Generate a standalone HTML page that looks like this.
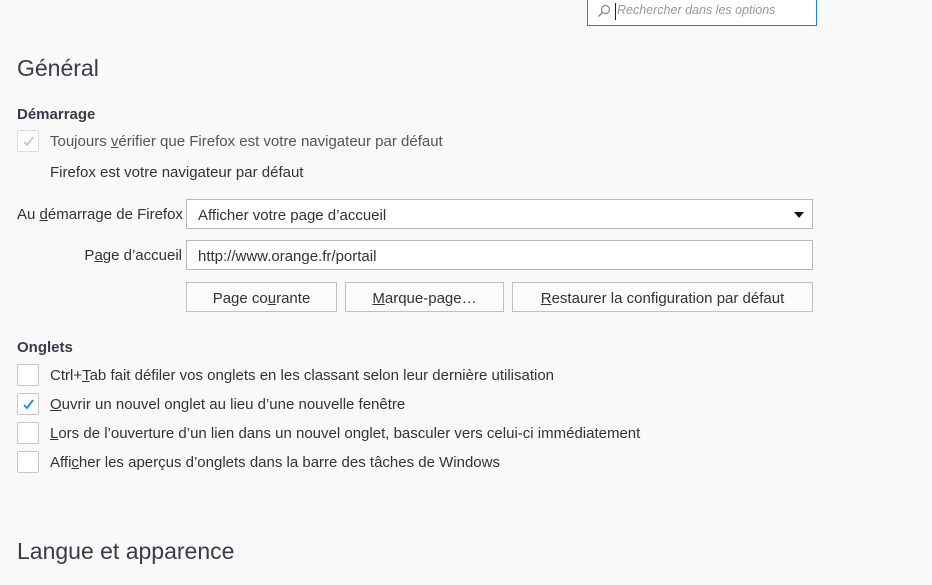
<!DOCTYPE html>
<html><head><meta charset="utf-8"><style>
*{box-sizing:border-box;margin:0;padding:0}
body{width:932px;height:585px;background:#f9f9fa;font-family:"Liberation Sans",sans-serif;color:#333;font-size:15px;position:relative;overflow:hidden}
.a{position:absolute;white-space:nowrap}
.h1{font-size:23px;color:#3b3b45;font-weight:300}
.h2{font-size:15px;font-weight:bold;color:#3b3b45}
.cb{position:absolute;width:22px;height:22px;border:1px solid #c8c8c8;background:#fff;border-radius:2px}
.cb svg{position:absolute;left:4px;top:4px}
.box{position:absolute;border:1px solid #b8b8b8;background:#fff;height:30px;line-height:31px;padding-left:11px}
.btn{position:absolute;border:1px solid #c0c0c0;background:#fbfbfb;height:30px;line-height:31px;text-align:center}
u{text-decoration:underline}
</style></head><body>
<div class="a" style="left:587px;top:-5px;width:230px;height:31px;border:1px solid #0a84ff;background:#fff"></div>
<svg class="a" style="left:597px;top:4px" width="14" height="14" viewBox="0 0 14 14"><circle cx="8.5" cy="5.5" r="4" fill="none" stroke="#888" stroke-width="1.2"/><path d="M5.5 8.5L1.5 12.5" stroke="#888" stroke-width="1.3"/></svg>
<div class="a" style="left:615px;top:3px;width:1px;height:17px;background:#222"></div>
<div class="a" style="left:617px;top:3px;font-size:12.5px;font-style:italic;color:#999">Rechercher dans les options</div>

<div class="a h1" style="left:17px;top:55px">Général</div>
<div class="a h2" style="left:17px;top:106px">Démarrage</div>
<div class="cb" style="left:17px;top:130px;border-color:#ddd"><svg width="13" height="13" viewBox="0 0 13 13"><path d="M2 7l3 3 6-8" fill="none" stroke="#9fc9ea" stroke-width="1.6"/></svg></div>
<div class="a" style="left:50px;top:133px;color:#555">Toujours <u>v</u>érifier que Firefox est votre navigateur par défaut</div>
<div class="a" style="left:50px;top:164px">Firefox est votre navigateur par défaut</div>

<div class="a" style="left:17px;top:206px">Au <u>d</u>émarrage de Firefox</div>
<div class="box" style="left:186px;top:199px;width:627px">Afficher votre page d’accueil
<svg class="a" style="right:8px;top:12px" width="10" height="6"><path d="M0 0h10L5 6z" fill="#111"/></svg></div>
<div class="a" style="left:0;width:182px;text-align:right;top:247px">P<u>a</u>ge d’accueil</div>
<div class="box" style="left:186px;top:240px;width:627px">http://www.orange.fr/portail</div>
<div class="btn" style="left:186px;top:282px;width:151px">Page co<u>u</u>rante</div>
<div class="btn" style="left:345px;top:282px;width:159px"><u>M</u>arque-page…</div>
<div class="btn" style="left:512px;top:282px;width:301px"><u>R</u>estaurer la configuration par défaut</div>

<div class="a h2" style="left:17px;top:339px">Onglets</div>
<div class="cb" style="left:17px;top:364px"></div>
<div class="a" style="left:50px;top:367px">Ctrl+<u>T</u>ab fait défiler vos onglets en les classant selon leur dernière utilisation</div>
<div class="cb" style="left:17px;top:393px"><svg width="13" height="13" viewBox="0 0 13 13"><path d="M2 7l3 3 6-8" fill="none" stroke="#0a84ff" stroke-width="1.8"/></svg></div>
<div class="a" style="left:50px;top:396px"><u>O</u>uvrir un nouvel onglet au lieu d’une nouvelle fenêtre</div>
<div class="cb" style="left:17px;top:422px"></div>
<div class="a" style="left:50px;top:425px"><u>L</u>ors de l’ouverture d’un lien dans un nouvel onglet, basculer vers celui-ci immédiatement</div>
<div class="cb" style="left:17px;top:451px"></div>
<div class="a" style="left:50px;top:454px">Affi<u>c</u>her les aperçus d’onglets dans la barre des tâches de Windows</div>

<div class="a h1" style="left:17px;top:538px;font-size:23px">Langue et apparence</div>
</body></html>
